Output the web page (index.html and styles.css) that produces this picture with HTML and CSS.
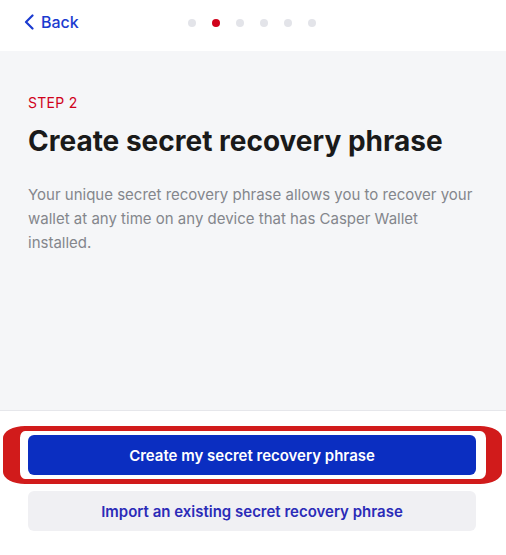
FILE: index.html
```
<!DOCTYPE html>
<html>
<head>
    <meta charset="utf-8">
    <meta name="viewport" content="width=device-width, initial-scale=1">
    <title>Casper Wallet</title>
    <link rel="stylesheet" href="styles.css">
</head>

<body>
    <div class="page">
        <header class="topbar">
            <a class="back" href="#">
                <svg width="10" height="16" viewBox="0 0 10 16"><path d="M8.5 1.5 L2 8 L8.5 14.5" fill="none" stroke="#1b3bd0" stroke-width="2.2" stroke-linecap="round" stroke-linejoin="round"/></svg>
                <span>Back</span>
            </a>
            <div class="steps">
                <span class="dot"></span>
                <span class="dot active"></span>
                <span class="dot"></span>
                <span class="dot"></span>
                <span class="dot"></span>
                <span class="dot"></span>
            </div>
        </header>

        <main class="content">
            <p class="step">STEP 2</p>
            <h1>Create secret recovery phrase</h1>
            <p class="desc">Your unique secret recovery phrase allows you to recover your wallet at any time on any device that has Casper Wallet installed.</p>
        </main>

        <footer class="actions">
            <div class="ring">
                <button class="btn primary">Create my secret recovery phrase</button>
            </div>
            <button class="btn secondary">Import an existing secret recovery phrase</button>
        </footer>
    </div>
</body>
</html>
```

FILE: styles.css
```
body{
    margin: 0;
    padding: 0;
    background: #fff;
    font-family: Inter, "Noto Sans", sans-serif;
    overflow: hidden;}

.page{
    height: 555px;
    display: flex;
    flex-direction: column;}

.topbar{
    height: 51px;
    position: relative;
    display: flex;
    align-items: center;
    padding: 0 24px;
    box-sizing: border-box;
    background: #fff;}

.back{
    display: flex;
    align-items: center;
    gap: 7px;
    color: #1b3bd0;
    text-decoration: none;
    font-size: 16px;
    font-weight: 500;
    margin-top: -7px;}

.steps{
    position: absolute;
    left: 188px;
    top: 19px;
    display: flex;
    gap: 16px;}

.dot{
    width: 8px;
    height: 8px;
    border-radius: 50%;
    background: #e3e4e9;}

.dot.active{ background: #d0021b; }

.content{
    flex: 1;
    background: #f5f6f8;
    padding: 43px 28px 0;
    border-bottom: 1px solid #e6e7eb;}

.step{
    margin: 0;
    color: #d0021b;
    font-size: 14px;
    letter-spacing: 0.3px;
    line-height: 18px;}

h1{
    margin: 11px 0 0;
    font-size: 28px;
    line-height: 36px;
    font-weight: 700;
    color: #1a1a1a;}

.desc{
    margin: 24px 0 0;
    font-size: 15px;
    line-height: 24px;
    color: #84868c;}

.actions{
    padding: 15px 30px 24px 28px;
    display: flex;
    flex-direction: column;}

.ring{
    margin: 0 -26px 7px -25px;
    padding: 4px 10px 4px 8px;
    border-style: solid;
    border-color: #d11b1b;
    border-width: 5px 16px 5px 17px;
    border-radius: 22px / 12px;
    background: #fff;}

.btn{
    display: block;
    width: 100%;
    height: 40px;
    border: none;
    border-radius: 6px;
    font-family: Inter, "Noto Sans", sans-serif;
    font-size: 15px;
    font-weight: 600;
    cursor: pointer;}

.primary{
    background: #0b2ec1;
    color: #fff;}

.secondary{
    background: #f0f0f3;
    color: #2b2bb8;}
```
